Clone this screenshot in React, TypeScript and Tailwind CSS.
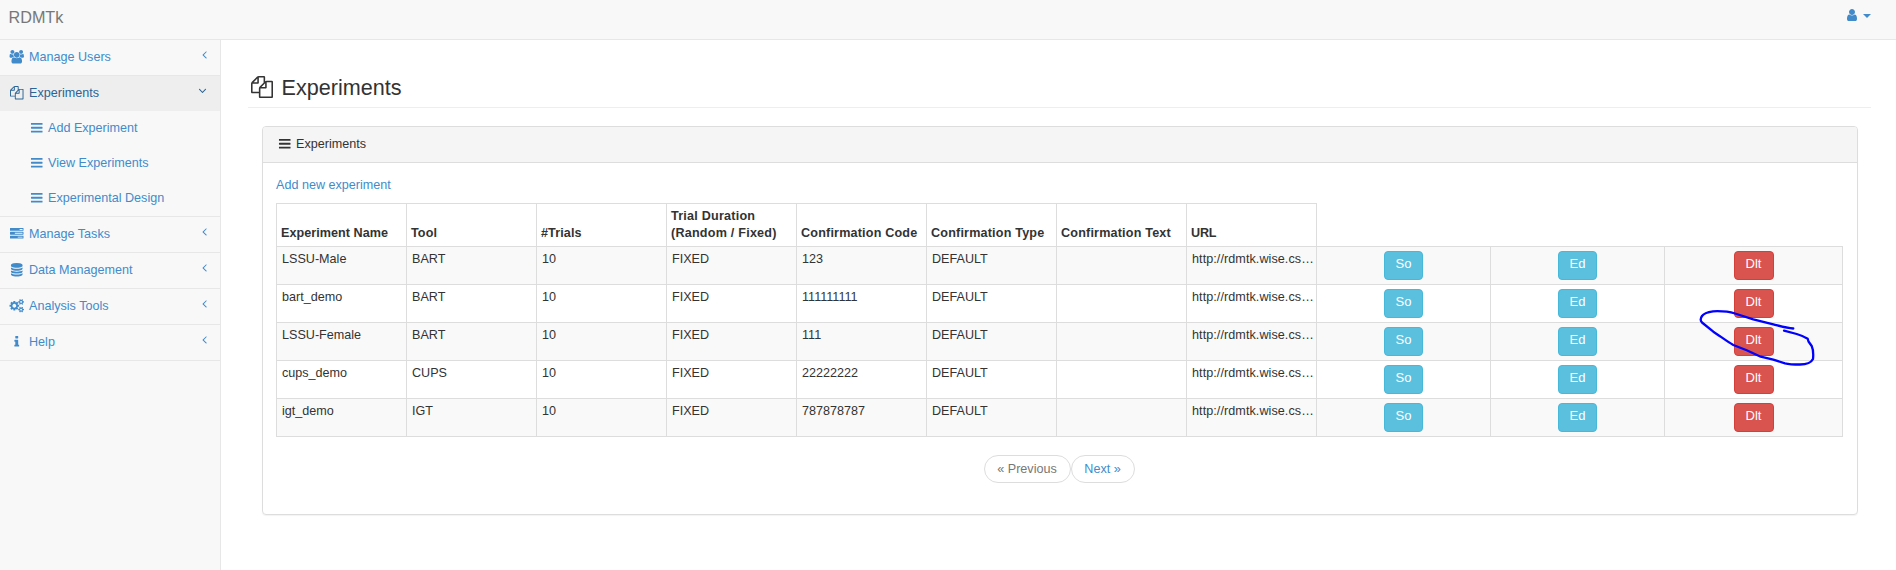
import React from "react";

const GROUP =
  "M529 896q-162 5-265 128h-134q-82 0-138-40.5t-56-118.5q0-353 124-353 6 0 43.5 21t97.5 42.5 119 21.5q67 0 133-23-5 37-5 66 0 139 81 256zm1071 637q0 120-73 189.5t-194 69.5h-874q-121 0-194-69.5t-73-189.5q0-53 3.5-103.5t14-109 26.5-108.5 43-97.5 62-81 85.5-53.5 111.5-20q10 0 43 21.5t73 48 107 48 135 21.5 135-21.5 107-48 73-48 43-21.5q61 0 111.5 20t85.5 53.5 62 81 43 97.5 26.5 108.5 14 109 3.5 103.5zm-1024-1277q0 106-75 181t-181 75-181-75-75-181 75-181 181-75 181 75 75 181zm704 384q0 159-112.5 271.5t-271.5 112.5-271.5-112.5-112.5-271.5 112.5-271.5 271.5-112.5 271.5 112.5 112.5 271.5zm576 225q0 78-56 118.5t-138 40.5h-134q-103-123-265-128 81-117 81-256 0-29-5-66 66 23 133 23 59 0 119-21.5t97.5-42.5 43.5-21q124 0 124 353zm-128-609q0 106-75 181t-181 75-181-75-75-181 75-181 181-75 181 75 75 181z";
const FILES =
  "M1696 384q40 0 68 28t28 68v1216q0 40-28 68t-68 28h-960q-40 0-68-28t-28-68v-288h-544q-40 0-68-28t-28-68v-672q0-40 20-88t48-76l408-408q28-28 76-48t88-20h416q40 0 68 28t28 68v328q68-40 128-40h416zm-544 213l-299 299h299v-299zm-640-384l-299 299h299v-299zm196 647l316-316v-416h-384v416q0 40-28 68t-68 28h-416v640h512v-256q0-40 20-88t48-76zm956 804v-1152h-384v416q0 40-28 68t-68 28h-416v640h896z";
const BARS =
  "M1664 1344v128q0 26-19 45t-45 19h-1408q-26 0-45-19t-19-45v-128q0-26 19-45t45-19h1408q26 0 45 19t19 45zm0-512v128q0 26-19 45t-45 19h-1408q-26 0-45-19t-19-45v-128q0-26 19-45t45-19h1408q26 0 45 19t19 45zm0-512v128q0 26-19 45t-45 19h-1408q-26 0-45-19t-19-45v-128q0-26 19-45t45-19h1408q26 0 45 19t19 45z";
const TASKS =
  "M1024 1408h640v-128h-640v128zm-384-512h1024v-128h-1024v128zm640-512h384v-128h-384v128zm512 832v256q0 26-19 45t-45 19h-1664q-26 0-45-19t-19-45v-256q0-26 19-45t45-19h1664q26 0 45 19t19 45zm0-512v256q0 26-19 45t-45 19h-1664q-26 0-45-19t-19-45v-256q0-26 19-45t45-19h1664q26 0 45 19t19 45zm0-512v256q0 26-19 45t-45 19h-1664q-26 0-45-19t-19-45v-256q0-26 19-45t45-19h1664q26 0 45 19t19 45z";
const DATABASE =
  "M896 768q237 0 443-43t325-127v170q0 69-103 128t-280 93.5-385 34.5-385-34.5-280-93.5-103-128v-170q119 84 325 127t443 43zm0 768q237 0 443-43t325-127v170q0 69-103 128t-280 93.5-385 34.5-385-34.5-280-93.5-103-128v-170q119 84 325 127t443 43zm0-384q237 0 443-43t325-127v170q0 69-103 128t-280 93.5-385 34.5-385-34.5-280-93.5-103-128v-170q119 84 325 127t443 43zm0-1152q208 0 385 34.5t280 93.5 103 128v128q0 69-103 128t-280 93.5-385 34.5-385-34.5-280-93.5-103-128v-128q0-69 103-128t280-93.5 385-34.5z";
const GEARS =
  "M832 896q0-106-75-181t-181-75-181 75-75 181 75 181 181 75 181-75 75-181zm768 512q0-52-38-90t-90-38-90 38-38 90q0 53 37.5 90.5t90.5 37.5 90.5-37.5 37.5-90.5zm0-1024q0-52-38-90t-90-38-90 38-38 90q0 53 37.5 90.5t90.5 37.5 90.5-37.5 37.5-90.5zm-384 421v185q0 10-7 19.5t-16 10.5l-155 24q-11 35-32 76 34 48 90 115 7 11 7 20 0 12-7 19-23 30-82.5 89.5t-78.5 59.5q-11 0-21-7l-115-90q-37 19-77 31-11 108-23 155-7 24-30 24h-186q-11 0-20-7.5t-10-17.5l-23-153q-34-10-75-31l-118 89q-7 7-20 7-11 0-21-8-144-133-144-160 0-9 7-19 10-14 41-53t47-61q-23-44-35-82l-152-24q-10-1-17-9.5t-7-19.5v-185q0-10 7-19.5t16-10.5l155-24q11-35 32-76-34-48-90-115-7-11-7-20 0-12 7-20 22-30 82-89t79-59q11 0 21 7l115 90q34-18 77-32 11-108 23-154 7-24 30-24h186q11 0 20 7.5t10 17.5l23 153q34 10 75 31l118-89q8-7 20-7 11 0 21 8 144 133 144 160 0 8-7 19-12 16-42 54t-45 60q23 48 34 82l152 23q10 2 17 10.5t7 19.5zm640 533v140q0 16-149 31-12 27-30 52 51 113 51 138 0 4-4 7-122 71-124 71-8 0-46-47t-52-68q-20 2-30 2t-30-2q-14 21-52 68t-46 47q-2 0-124-71-4-3-4-7 0-25 51-138-18-25-30-52-149-15-149-31v-140q0-16 149-31 13-29 30-52-51-113-51-138 0-4 4-7 4-2 35-20t59-34 30-16q8 0 46 46.5t52 67.5q20-2 30-2t30 2q51-71 92-112l6-2q4 0 124 70 4 3 4 7 0 25-51 138 17 23 30 52 149 15 149 31zm0-1024v140q0 16-149 31-12 27-30 52 51 113 51 138 0 4-4 7-122 71-124 71-8 0-46-47t-52-68q-20 2-30 2t-30-2q-14 21-52 68t-46 47q-2 0-124-71-4-3-4-7 0-25 51-138-18-25-30-52-149-15-149-31v-140q0-16 149-31 13-29 30-52-51-113-51-138 0-4 4-7 4-2 35-20t59-34 30-16q8 0 46 46.5t52 67.5q20-2 30-2t30 2q51-71 92-112l6-2q4 0 124 70 4 3 4 7 0 25-51 138 17 23 30 52 149 15 149 31z";
const INFO =
  "M1216 1344v128q0 26-19 45t-45 19h-512q-26 0-45-19t-19-45v-128q0-26 19-45t45-19h64v-384h-64q-26 0-45-19t-19-45v-128q0-26 19-45t45-19h384q26 0 45 19t19 45v576h64q26 0 45 19t19 45zm-128-1152v192q0 26-19 45t-45 19h-256q-26 0-45-19t-19-45v-192q0-26 19-45t45-19h256q26 0 45 19t19 45z";
const USER =
  "M1536 1399q0 109-62.5 187t-150.5 78h-854q-88 0-150.5-78t-62.5-187q0-85 8.5-160.5t31.5-152 58.5-131 94-89 134.5-34.5q131 128 313 128t313-128q76 0 134.5 34.5t94 89 58.5 131 31.5 152 8.5 160.5zm-256-887q0 159-112.5 271.5t-271.5 112.5-271.5-112.5-112.5-271.5 112.5-271.5 271.5-112.5 271.5 112.5 112.5 271.5z";
const ANGLE_LEFT =
  "M1203 544q0 13-10 23l-393 393 393 393q10 10 10 23t-10 23l-50 50q-10 10-23 10t-23-10l-466-466q-10-10-10-23t10-23l466-466q10-10 23-10t23 10l50 50q10 10 10 23z";
const ANGLE_DOWN =
  "M1395 736q0 13-10 23l-466 466q-10 10-23 10t-23-10l-466-466q-10-10-10-23t10-23l50-50q10-10 23-10t23 10l393 393 393-393q10-10 23-10t23 10l50 50q10 10 10 23z";

function Icon({ d, className = "size-[13px]" }: { d: string; className?: string }) {
  return (
    <svg viewBox="0 0 1792 1792" fill="currentColor" className={`shrink-0 overflow-visible ${className}`}>
      <path d={d} />
    </svg>
  );
}

function MenuItem({ icon, label, open = false }: { icon: string; label: string; open?: boolean }) {
  return (
    <a className={`flex h-[35px] pl-[10px] ${open ? "bg-[#eeeeee] pr-[11px] text-[#2a6496]" : "pr-[9px]"}`}>
      <Icon d={icon} className="mt-[10px] size-[13.5px]" />
      <span className="ml-[5.5px] mt-[8px] grow leading-[18px]">{label}</span>
      <Icon d={open ? ANGLE_DOWN : ANGLE_LEFT} className="mt-[8px] size-[13px]" />
    </a>
  );
}

function SubItem({ label }: { label: string }) {
  return (
    <a className="flex h-[35px] pl-[30px]">
      <Icon d={BARS} className="mt-[10px] size-[13.5px]" />
      <span className="ml-[4.5px] mt-[8px] leading-[18px]">{label}</span>
    </a>
  );
}

function Button({ label, danger = false }: { label: string; danger?: boolean }) {
  return (
    <button
      className={`mx-auto flex h-[29px] justify-center rounded-[4px] border pt-[3px] text-[13px] leading-[18px] text-white ${
        danger ? "w-[40px] border-[#d43f3a] bg-[#d9534f]" : "w-[39px] border-[#46b8da] bg-[#5bc0de]"
      }`}
    >
      {label}
    </button>
  );
}

const headers = [
  { text: "Experiment Name", tracking: "tracking-[0.04px]" },
  { text: "Tool", tracking: "tracking-[0.1px]" },
  { text: "#Trials", tracking: "tracking-[0.1px]" },
  { text: "Trial Duration (Random / Fixed)", tracking: "tracking-[0.22px]" },
  { text: "Confirmation Code", tracking: "tracking-[0.18px]" },
  { text: "Confirmation Type", tracking: "tracking-[0.18px]" },
  { text: "Confirmation Text", tracking: "tracking-[0.18px]" },
  { text: "URL", tracking: "tracking-[-0.2px]" },
];

const rows = [
  ["LSSU-Male", "BART", "123"],
  ["bart_demo", "BART", "111111111"],
  ["LSSU-Female", "BART", "111"],
  ["cups_demo", "CUPS", "22222222"],
  ["igt_demo", "IGT", "787878787"],
];

export default function App() {
  return (
    <div className="relative flex h-[570px] w-[1896px] flex-col overflow-hidden bg-white font-['Liberation_Sans',Arial,sans-serif] text-[12.6px] text-[#333333]">
      <header className="flex h-[40px] shrink-0 justify-between border-b border-[#e7e7e7] bg-[#f8f8f8] pl-[8.5px] pr-[25px]">
        <span className="mt-[8px] text-[16.2px] leading-[18px] text-[#777777]">RDMTk</span>
        <div className="flex text-[#428bca]">
          <Icon d={USER} className="mt-[8px] size-[14px]" />
          <svg viewBox="0 0 8 4" className="ml-[4px] mt-[14px] h-[4px] w-[8px]" fill="currentColor">
            <path d="M0 0h8L4 4z" />
          </svg>
        </div>
      </header>

      <div className="flex grow">
        <nav className="flex w-[221px] shrink-0 flex-col border-r border-[#e7e7e7] bg-[#f8f8f8] text-[#428bca]">
          <div className="border-b border-[#e7e7e7]">
            <MenuItem icon={GROUP} label="Manage Users" />
          </div>
          <div className="border-b border-[#e7e7e7]">
            <MenuItem icon={FILES} label="Experiments" open />
            <SubItem label="Add Experiment" />
            <SubItem label="View Experiments" />
            <SubItem label="Experimental Design" />
          </div>
          <div className="border-b border-[#e7e7e7]">
            <MenuItem icon={TASKS} label="Manage Tasks" />
          </div>
          <div className="border-b border-[#e7e7e7]">
            <MenuItem icon={DATABASE} label="Data Management" />
          </div>
          <div className="border-b border-[#e7e7e7]">
            <MenuItem icon={GEARS} label="Analysis Tools" />
          </div>
          <div className="border-b border-[#e7e7e7]">
            <MenuItem icon={INFO} label="Help" />
          </div>
        </nav>

        <main className="grow pl-[27px] pr-[25px]">
          <h1 className="flex h-[68px] border-b border-[#eeeeee] pl-[3px] text-[21.6px]">
            <Icon d={FILES} className="mt-[36px] size-[22px]" />
            <span className="ml-[8.5px] mt-[36px] leading-[24px]">Experiments</span>
          </h1>

          <section className="ml-[14px] mr-[13px] mt-[18px] h-[389px] rounded-[4px] border border-[#dddddd] shadow-[0_1px_1px_rgba(0,0,0,0.05)]">
            <div className="flex h-[36px] rounded-t-[3px] border-b border-[#dddddd] bg-[#f5f5f5] pl-[15px]">
              <Icon d={BARS} className="mt-[10px] size-[13.5px]" />
              <span className="ml-[4.5px] mt-[8px] leading-[18px]">Experiments</span>
            </div>

            <div className="px-[13px] pt-[13px]">
              <a className="block h-[27px] leading-[18px] text-[#428bca]">Add new experiment</a>

              <table className="w-[1567px] table-fixed border-separate border-spacing-0">
                <colgroup>
                  <col className="w-[131px]" />
                  <col className="w-[130px]" />
                  <col className="w-[130px]" />
                  <col className="w-[130px]" />
                  <col className="w-[130px]" />
                  <col className="w-[130px]" />
                  <col className="w-[130px]" />
                  <col className="w-[130px]" />
                  <col className="w-[174px]" />
                  <col className="w-[174px]" />
                  <col className="w-[178px]" />
                </colgroup>
                <thead>
                  <tr className="h-[44px]">
                    {headers.map((h) => (
                      <th
                        key={h.text}
                        className={`border-b border-r border-t border-[#dddddd] p-0 pb-[4px] pl-[4px] text-left align-bottom leading-[17px] first:border-l ${h.tracking}`}
                      >
                        {h.text}
                      </th>
                    ))}
                    <th colSpan={3} className="border-b border-[#dddddd] p-0" />
                  </tr>
                </thead>
                <tbody>
                  {rows.map(([name, tool, code]) => (
                    <tr key={name} className="h-[38px] odd:bg-[#f9f9f9]">
                      {[name, tool, "10", "FIXED", code, "DEFAULT", "", "http://rdmtk.wise.cs…"].map((v, i) => (
                        <td
                          key={i}
                          className="whitespace-nowrap border-b border-r border-[#dddddd] p-0 pl-[5px] pt-[3px] align-top leading-[18px] first:border-l last-of-type:tracking-normal nth-[8]:tracking-[0.07px]"
                        >
                          {v}
                        </td>
                      ))}
                      <td className="border-b border-r border-[#dddddd] p-0 align-middle">
                        <Button label="So" />
                      </td>
                      <td className="border-b border-r border-[#dddddd] p-0 align-middle">
                        <Button label="Ed" />
                      </td>
                      <td className="border-b border-r border-[#dddddd] p-0 align-middle">
                        <Button label="Dlt" danger />
                      </td>
                    </tr>
                  ))}
                </tbody>
              </table>

              <div className="mt-[18px] flex justify-center pr-[2px] leading-[18px]">
                <a className="flex h-[28px] w-[87px] justify-center rounded-[14px] border border-[#dddddd] pt-[4px] text-[#777777]">« Previous</a>
                <a className="flex h-[28px] w-[64px] justify-center rounded-[14px] border border-[#dddddd] pt-[4px] text-[#428bca]">Next »</a>
              </div>
            </div>
          </section>
        </main>
      </div>

      <svg viewBox="1696 306 122 64" className="absolute left-[1696px] top-[306px] h-[64px] w-[122px]" fill="none">
        <path
          d="M1793.3 328.5C1786 328 1780 326 1773.3 324.3L1753.3 319.3L1735 313.5C1727 311 1720 311 1713 311.3C1708 312 1704 313 1702 316C1700 319 1700.5 321 1702 322.5L1713.3 331.7C1720 336 1727 341.5 1733.3 345L1746.7 350.3L1760.7 356.7L1773.3 359.7L1785 363.3C1790 364.5 1795 364.5 1800 364.5C1806 364.5 1811 363 1813 359C1813.5 354 1813.5 350 1811.7 346L1808.5 341.5L1807.7 338.7C1804 336.5 1800 335 1796.7 334L1784 330.7"
          stroke="#0000ff"
          strokeWidth="2.3"
          strokeLinecap="round"
          strokeLinejoin="round"
        />
      </svg>
    </div>
  );
}
